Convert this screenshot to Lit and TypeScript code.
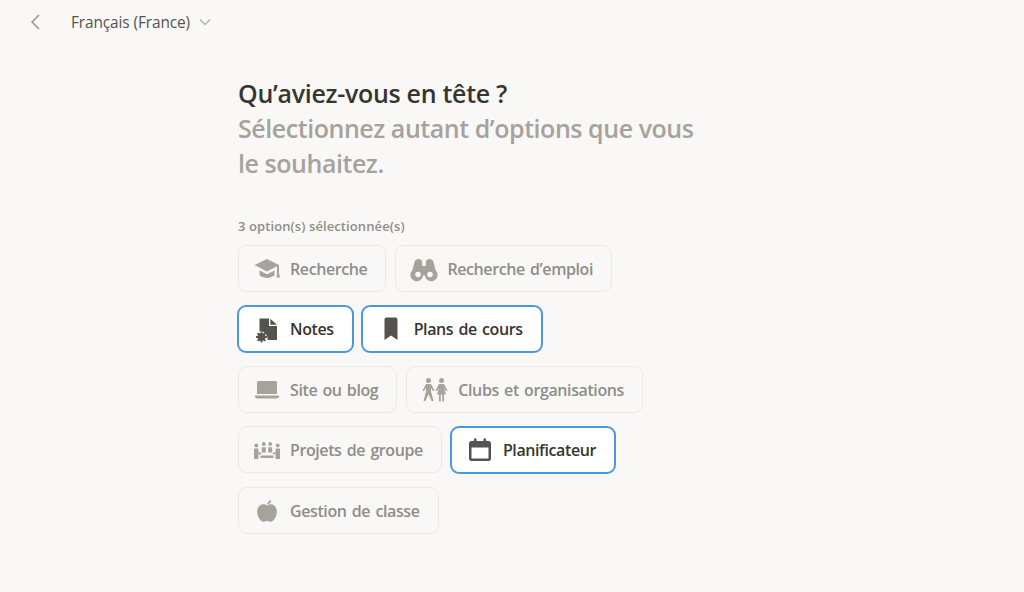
import { LitElement, html, css, svg } from "lit";
import { customElement, state } from "lit/decorators.js";

const icons: Record<string, unknown> = {
  cap: svg`<path d="M14 4 1.500 10 14 16.500 24 11.300V18h2v-8z"/><path d="M6.500 15.500v4.700C9 22 11.500 23 14 23s5-1 7.500-2.800v-4.700L14 19.300z"/><path d="M24.200 18h1.800l1 4.500h-3.600z"/>`,
  binoculars: svg`<path d="M8.500 4c-2.200 0-3.500 1.300-3.900 3L2.300 15.500A6.300 6.300 0 1 0 13 20.500h2a6.300 6.300 0 1 0 10.700-5L23.400 7c-.4-1.700-1.700-3-3.900-3-2.300 0-3.700 1.400-3.700 3.500V11h-3.600V7.500C12.200 5.400 10.800 4 8.500 4z"/><circle cx="8" cy="19.500" r="2.800" fill="var(--hole)"/><circle cx="20" cy="19.500" r="2.800" fill="var(--hole)"/>`,
  notes: svg`<path d="M6.500 3.500h9.500v7.500h8v14H14.500a7.500 7.500 0 0 0-8-8.600z"/><path d="M17.300 3.700 24 9.700h-6.700z"/><circle cx="8.500" cy="22" r="4"/><path d="M8.500 16.500v11M3 22h11M4.600 18.100l7.800 7.800M12.400 18.100l-7.800 7.800" stroke="currentColor" stroke-width="1.800"/>`,
  bookmark: svg`<path d="M7.500 4.500c0-1.100.9-2 2-2h9c1.100 0 2 .9 2 2V25L14 20.500 7.500 25z"/>`,
  laptop: svg`<path d="M5.500 5h17c.8 0 1.500.7 1.500 1.500V18H4V6.500C4 5.700 4.700 5 5.500 5z"/><path d="M2 19.500h24v.8c0 1.300-1 2.200-2.300 2.200H4.300C3 22.500 2 21.600 2 20.300z"/>`,
  people: svg`<circle cx="7.500" cy="4.500" r="2.500"/><circle cx="20.500" cy="4.500" r="2.500"/><path d="M5 8h5l3.500 6.500-1.300.8L10 12v3.500l2.500 9.500h-2L7.500 18l-3 7h-2L5 15.500V12l-2.200 3.300-1.300-.8z"/><path d="M18 8h5l3.500 6.500-1.300.8-2.200-3.300 2 6.500h-2v7h-1.800v-7h-1.400v7H18v-7h-2l2-6.500-2.200 3.300-1.300-.8z"/>`,
  group: svg`<circle cx="3.300" cy="9.500" r="1.900"/><circle cx="10.800" cy="8" r="1.900"/><circle cx="17.200" cy="8" r="1.900"/><circle cx="24.700" cy="9.500" r="1.900"/><path d="M1 12.500h4.500v4h2.700v1.700H5.500V23H1zM8.800 11.200h4v5.300h-4zM15.200 11.200h4v5.300h-4zM22.500 12.500H27V23h-4.500v-4.800h-2.700v-1.700h2.700zM7.500 19.500h13V22h-13z"/>`,
  calendar: svg`<path fill-rule="evenodd" d="M8 2.500h2.500V5h7V2.500H20V5h2.500C24 5 25 6 25 7.500v15c0 1.500-1 2.500-2.500 2.500h-17C4 25 3 24 3 22.500v-15C3 6 4 5 5.500 5H8zM5.500 11.500v11h17v-11z"/>`,
  apple: svg`<path d="M14.300 7.200c.3-2.200 1.700-3.700 3.900-4.200.1 2.300-1.400 4-3.900 4.200z"/><path d="M14 8.300c2.200-1.400 5.300-1.400 7.200.2 2 1.700 2.800 4.200 2.600 7-.3 4.200-2.800 9-6.300 9.300-1.400.1-2.300-.7-3.500-.7s-2.100.8-3.500.7c-3.500-.3-6-5.100-6.300-9.300-.2-2.800.6-5.300 2.600-7 1.900-1.600 5-1.600 7.200-.2z"/>`,
};

const options = [
  { label: "Recherche", icon: "cap", selected: false },
  { label: "Recherche d’emploi", icon: "binoculars", selected: false },
  { label: "Notes", icon: "notes", selected: true },
  { label: "Plans de cours", icon: "bookmark", selected: true },
  { label: "Site ou blog", icon: "laptop", selected: false },
  { label: "Clubs et organisations", icon: "people", selected: false },
  { label: "Projets de groupe", icon: "group", selected: false },
  { label: "Planificateur", icon: "calendar", selected: true },
  { label: "Gestion de classe", icon: "apple", selected: false },
];

@customElement("app-root")
export class AppRoot extends LitElement {
  @state() options = options;

  static styles = css`
    :host {
      display: block;
      height: 592px;
      background: #f9f8f7;
      font-family: "Open Sans", "Noto Sans", sans-serif;
      color: #37352f;
      overflow: hidden;
    }
    .topbar {
      display: flex;
      align-items: center;
      height: 44px;
      padding-left: 29px;
    }
    .back {
      width: 12px;
      height: 18px;
      fill: none;
      stroke: #8f8e8a;
      stroke-width: 1.4;
      margin-right: 30px;
    }
    .lang {
      font-size: 15.4px;
      color: #55534e;
      letter-spacing: -0.1px;
    }
    .caret {
      width: 12px;
      height: 8px;
      fill: none;
      stroke: #b0afab;
      stroke-width: 1.3;
      margin-left: 9px;
    }
    main {
      width: 460px;
      margin-left: 238px;
      padding-top: 32px;
    }
    h1 {
      margin: 0;
      font-size: 25px;
      line-height: 35px;
      font-weight: 600;
      letter-spacing: -0.3px;
    }
    h1 span {
      display: block;
      color: #a5a39c;
      letter-spacing: -0.45px;
    }
    .count {
      margin-top: 36px;
      font-size: 13px;
      line-height: 18px;
      font-weight: 600;
      color: #8f8d87;
      letter-spacing: 0.1px;
    }
    .list {
      display: flex;
      flex-wrap: wrap;
      gap: 13px 9px;
      margin-top: 10px;
    }
    .pill {
      --hole: #f9f8f7;
      display: flex;
      align-items: center;
      height: 47px;
      box-sizing: border-box;
      padding: 0 18px 0 14px;
      border: 1px solid #ebe9e6;
      border-radius: 9px;
      font-size: 16px;
      font-weight: 600;
      letter-spacing: -0.4px;
      word-spacing: 1.5px;
      color: #8f8d87;
    }
    .pill svg {
      width: 28px;
      height: 28px;
      margin-right: 9px;
      flex: none;
      fill: #a5a39c;
      color: #a5a39c;
    }
    .pill.selected {
      --hole: #fff;
      margin: 0 -1px;
      height: 48px;
      padding: 0 18px 0 14px;
      border: 2px solid #4a98e0;
      background: #fff;
      color: #37352f;
    }
    .pill.selected svg {
      fill: #55534e;
      color: #55534e;
    }
  `;

  render() {
    const picked = this.options.filter((o) => o.selected).length;
    return html`
      <div class="topbar">
        <svg class="back" viewBox="0 0 12 18"><path d="M10 2 3 9l7 7" /></svg>
        <span class="lang">Français (France)</span>
        <svg class="caret" viewBox="0 0 12 8"><path d="M1 1.500 6 6.500 11 1.500" /></svg>
      </div>
      <main>
        <h1>Qu’aviez-vous en tête ?<span>Sélectionnez autant d’options que vous le souhaitez.</span></h1>
        <div class="count">${picked} option(s) sélectionnée(s)</div>
        <div class="list">
          ${this.options.map(
            (o) => html`
              <div class="pill ${o.selected ? "selected" : ""}">
                <svg viewBox="0 0 28 28">${icons[o.icon]}</svg>
                <span>${o.label}</span>
              </div>
            `
          )}
        </div>
      </main>
    `;
  }
}
